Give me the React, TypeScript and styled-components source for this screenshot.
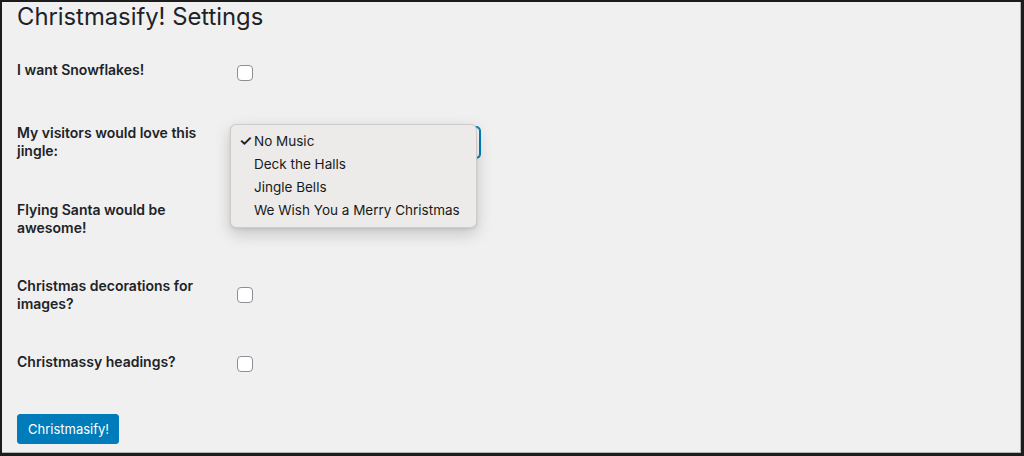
import React from "react";
import styled, { createGlobalStyle } from "styled-components";

const Global = createGlobalStyle`
  html, body { margin: 0; padding: 0; }
  body { font-family: Inter, "Noto Sans", sans-serif; color: #1d2327; }
  * { box-sizing: border-box; }
`;

const Frame = styled.div`
  width: 1024px;
  height: 456px;
  background: #f0f0f1;
  border: 2px solid #1c1c1c;
  border-right-width: 3px;
  border-bottom-width: 3px;
  box-shadow: inset -1px -1px 0 #b4b4b4;
  padding: 0 15px;
  overflow: hidden;
`;

const Title = styled.h1`
  margin: 0;
  padding: 0;
  font-size: 23.8px;
  font-weight: 400;
  line-height: 30px;
  color: #1d2327;
`;

const Form = styled.div`
  margin-top: 9px;
  display: flex;
  flex-direction: column;
`;

const Row = styled.div<{ $h?: number }>`
  display: grid;
  grid-template-columns: 210px 1fr;
  min-height: ${(p) => p.$h ?? 62}px;
`;

const Label = styled.div`
  padding: 20px 10px 20px 0;
  font-size: 14px;
  font-weight: 600;
  line-height: 18px;
  color: #1d2327;
`;

const Cell = styled.div`
  padding: 0 10px;
  display: flex;
  align-items: center;
  position: relative;
`;

const Checkbox = styled.span`
  display: block;
  width: 16px;
  height: 16px;
  border: 1px solid #8c8f94;
  border-radius: 4px;
  background: #fff;
`;

const Select = styled.div`
  width: 243px;
  height: 31px;
  border: 1px solid #007cba;
  box-shadow: 0 0 0 1px #007cba;
  border-radius: 4px;
  background: #fff;
`;

const Menu = styled.div`
  position: absolute;
  left: 3px;
  top: 50%;
  margin-top: -19px;
  width: 247px;
  padding: 5px 0;
  background: #ecebe9;
  border: 1px solid rgba(0, 0, 0, 0.13);
  border-radius: 6px;
  box-shadow: 0 6px 16px rgba(0, 0, 0, 0.18), 0 1px 3px rgba(0, 0, 0, 0.1);
  z-index: 2;
`;

const Item = styled.div`
  position: relative;
  height: 23px;
  line-height: 22px;
  padding-left: 23px;
  font-size: 13.5px;
  color: #1a1a1a;
  white-space: nowrap;
`;

const Check = styled.span`
  position: absolute;
  left: 8px;
  top: 0;
  font-size: 15px;
  font-weight: 600;
`;

const Submit = styled.button`
  margin-top: 19px;
  height: 30px;
  padding: 0 10px;
  border: 1px solid #007cba;
  border-radius: 3px;
  background: #007cba;
  color: #fff;
  font-family: Inter, "Noto Sans", sans-serif;
  font-size: 13px;
  line-height: 28px;
  width: 102px;
`;

export default function App() {
  const options = ["No Music", "Deck the Halls", "Jingle Bells", "We Wish You a Merry Christmas"];
  return (
    <>
      <Global />
      <Frame>
        <Title>Christmasify! Settings</Title>
        <Form>
          <Row $h={63}>
            <Label>I want Snowflakes!</Label>
            <Cell><Checkbox /></Cell>
          </Row>
          <Row $h={77}>
            <Label>My visitors would love this jingle:</Label>
            <Cell>
              <Select />
              <Menu>
                {options.map((o, i) => (
                  <Item key={o}>
                    {i === 0 && <Check>✓</Check>}
                    {o}
                  </Item>
                ))}
              </Menu>
            </Cell>
          </Row>
          <Row $h={76}>
            <Label>Flying Santa would be awesome!</Label>
            <Cell />
          </Row>
          <Row $h={76}>
            <Label>Christmas decorations for images?</Label>
            <Cell><Checkbox /></Cell>
          </Row>
          <Row>
            <Label>Christmassy headings?</Label>
            <Cell><Checkbox /></Cell>
          </Row>
        </Form>
        <Submit>Christmasify!</Submit>
      </Frame>
    </>
  );
}
